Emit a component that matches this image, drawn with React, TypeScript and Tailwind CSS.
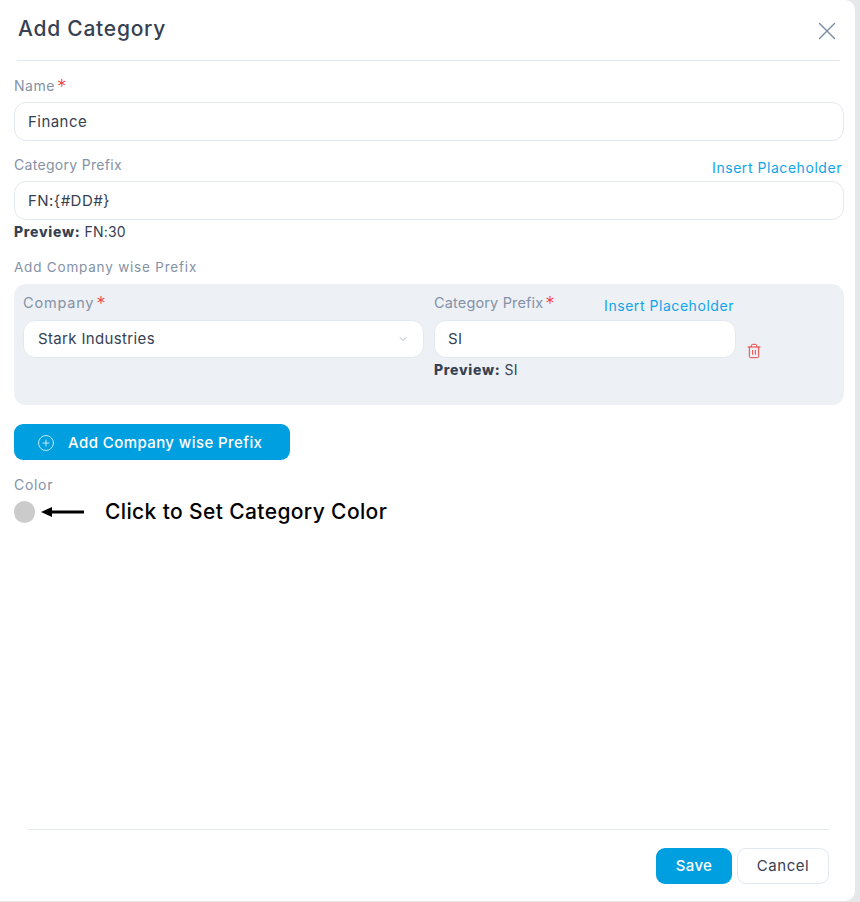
import React from 'react';
import { X, ChevronDown, CirclePlus, Trash2 } from 'lucide-react';

const Req = () => <span className="inline-block h-[14px] align-top text-[#ef4444] text-[19px] leading-[21px] font-light ml-[2px]">*</span>;

const Field = ({ value, className = '' }: { value: string; className?: string }) => (
  <div className={`flex items-center bg-white border border-[#e2e8f0] rounded-[12px] text-[15px] text-[#364152] tracking-[0.45px] ${className}`}>
    {value}
  </div>
);

export default function App() {
  return (
    <div className="w-[860px] h-[902px] bg-[#e5e7eb] font-['Inter',sans-serif]">
      <div className="w-[855px] h-[901px] bg-white rounded-r-[10px] flex flex-col">
        <div className="h-[61px] ml-[17px] mr-[15px] border-b border-[#e2e8f0] flex items-center justify-between pb-[3px]">
          <h1 className="text-[21px] font-medium text-[#364152] tracking-[0.75px] ml-px">Add Category</h1>
          <X className="w-[30px] h-[30px] text-[#7a8ba3] mt-[4px] mr-[-2px]" strokeWidth={1.1} />
        </div>

        <div className="flex-1 ml-[14px] mr-[11px] flex flex-col">
          <label className="h-[41px] pt-[15px] text-[14px] leading-[20px] text-[#8492a6] tracking-[0.55px]">
            Name<Req />
          </label>
          <Field value="Finance" className="h-[39px] px-[13px] pt-[2px]" />

          <div className="h-[40px] flex justify-between items-start pt-[14px] text-[14px] leading-[20px] tracking-[0.3px]">
            <span className="text-[#8492a6]">Category Prefix</span>
            <span className="text-[#0ea5e9] tracking-[0.55px] mt-[3px] mr-[2px]">Insert Placeholder</span>
          </div>
          <Field value="FN:{#DD#}" className="h-[39px] px-[13px] pt-[2px]" />
          <p className="h-[24px] pt-[2px] text-[14px] leading-[20px] text-[#364152] tracking-[0.2px]">
            <b className="font-extrabold tracking-[0.72px]">Preview:</b> FN:30
          </p>

          <label className="h-[40px] pt-[13px] text-[13.5px] leading-[20px] text-[#8492a6] tracking-[0.8px]">
            Add Company wise Prefix
          </label>

          <div className="h-[121px] bg-[#edf0f5] rounded-[12px] pl-[9px] pt-[9px] flex">
            <div className="w-[401px]">
              <label className="block h-[27px] text-[14.5px] leading-[20px] text-[#8492a6] tracking-[0.8px]">
                Company<Req />
              </label>
              <div className="h-[38px] bg-white border border-[#e2e8f0] rounded-[12px] flex items-center justify-between pl-[14px] pr-[14px] text-[15px] text-[#364152] tracking-[0.35px]">
                Stark Industries
                <ChevronDown className="w-[12px] h-[12px] text-[#94a3b8]" strokeWidth={1.5} />
              </div>
            </div>
            <div className="w-[302px] ml-[10px]">
              <div className="h-[27px] flex justify-between text-[14.5px] leading-[20px] tracking-[0.15px]">
                <span className="text-[#8492a6]">Category Prefix<Req /></span>
                <span className="text-[14px] tracking-[0.55px] text-[#0ea5e9] mt-[3px] mr-[2px]">Insert Placeholder</span>
              </div>
              <Field value="SI" className="h-[38px] px-[13px]" />
              <p className="mt-[2px] text-[14px] leading-[20px] text-[#364152] tracking-[0.2px]">
                <b className="font-extrabold tracking-[0.72px]">Preview:</b> SI
              </p>
            </div>
            <Trash2 className="w-[16px] h-[16px] text-[#ef4444] ml-[10px] mt-[50px]" strokeWidth={1.5} />
          </div>

          <button className="mt-[19px] w-[276px] h-[36px] bg-[#009fdf] rounded-[9px] flex items-center pl-[23px] pt-[2px] text-white text-[15px] font-medium tracking-[0.42px]">
            <CirclePlus className="w-[18px] h-[18px] mr-[13px]" strokeWidth={1} />
            Add Company wise Prefix
          </button>

          <label className="mt-[15px] h-[20px] text-[14px] leading-[20px] text-[#8492a6] tracking-[0.7px]">Color</label>
          <div className="mt-[6px] h-[22px] flex items-center">
            <div className="w-[21px] h-[22px] rounded-full bg-[#cbcbcb]" />
            <svg className="ml-[6px] w-[43px] h-[12px]" viewBox="0 0 43 12">
              <path d="M0 6 L11 1 V4.5 H43 V7.5 H11 V11 Z" fill="#000" />
            </svg>
            <span className="ml-[21px] text-[21px] font-medium text-black tracking-[0.38px]">Click to Set Category Color</span>
          </div>
        </div>

        <div className="ml-[28px] mr-[26px] h-[72px] border-t border-[#e2e8f0] flex justify-end items-start pt-[18px] gap-[5px]">
          <button className="w-[76px] h-[36px] pt-px bg-[#009fdf] rounded-[9px] text-white text-[15px] font-medium tracking-[0.3px]">Save</button>
          <button className="w-[92px] h-[36px] pt-px bg-white border border-[#e2e8f0] rounded-[9px] text-[#364152] text-[15px] tracking-[0.55px]">Cancel</button>
        </div>
      </div>
    </div>
  );
}
